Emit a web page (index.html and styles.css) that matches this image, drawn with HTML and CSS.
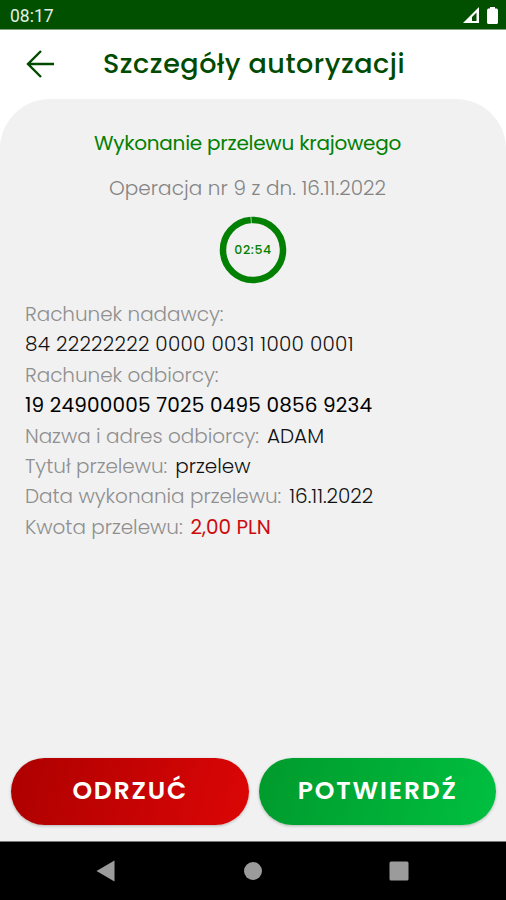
FILE: index.html
```html
<!DOCTYPE html>
<html lang="pl">
<head>
  <meta charset="UTF-8" />
  <meta name="viewport" content="width=device-width, initial-scale=1.0"/>
  <title>Szczegóły autoryzacji</title>
  <link rel="stylesheet" href="styles.css">
</head>
<body>
  <div class="status-bar">
    <span class="clock">08:17</span>
    <div class="status-icons">
      <svg width="16" height="16" viewBox="0 0 16 16"><path fill="#fff" fill-rule="evenodd" d="M0 16 16 0V16ZM9 14H13.500V5.500L9 10Z"/></svg>
      <svg width="11" height="17" viewBox="0 0 11 17"><path fill="#fff" d="M3 0H8V1.500H10L11 3V16L10 17H1L0 16V3L1 1.500H3Z"/></svg>
    </div>
  </div>

  <header>
    <a href="#" class="back">
      <svg width="28" height="28" viewBox="0 0 28 28"><path d="M15 1 2 14 15 27M2 14H28" fill="none" stroke="#004b00" stroke-width="2.400"/></svg>
    </a>
    <h1>Szczegóły autoryzacji</h1>
  </header>

  <main>
    <h2>Wykonanie przelewu krajowego</h2>
    <p class="operation">Operacja nr 9 z dn. 16.11.2022</p>

    <div class="timer">
      <svg width="68" height="68" viewBox="0 0 68 68">
        <circle cx="34" cy="34" r="30" fill="none" stroke="#028002" stroke-width="6.500" stroke-dasharray="187.500 1" transform="rotate(-93 34 34)"/>
      </svg>
      <span class="time">02:54</span>
    </div>

    <div class="details">
      <p><span class="label">Rachunek nadawcy:</span></p>
      <p><span class="value account">84 22222222 0000 0031 1000 0001</span></p>
      <p><span class="label">Rachunek odbiorcy:</span></p>
      <p><span class="value account strong">19 24900005 7025 0495 0856 9234</span></p>
      <p><span class="label">Nazwa i adres odbiorcy:</span><span class="value">ADAM</span></p>
      <p><span class="label">Tytuł przelewu:</span><span class="value">przelew</span></p>
      <p><span class="label">Data wykonania przelewu:</span><span class="value">16.11.2022</span></p>
      <p><span class="label">Kwota przelewu:</span><span class="value amount">2,00 PLN</span></p>
    </div>

    <div class="actions">
      <button type="button" class="btn btn-reject">ODRZUĆ</button>
      <button type="button" class="btn btn-confirm">POTWIERDŹ</button>
    </div>
  </main>

  <div class="nav-bar">
    <svg width="19" height="22" viewBox="0 0 19 22"><path d="M0.500 11 18.500 0.500V21.500Z" fill="#9b9b9b"/></svg>
    <svg width="20" height="20" viewBox="0 0 20 20"><circle cx="11" cy="10" r="9" fill="#9b9b9b"/></svg>
    <svg width="20" height="20" viewBox="0 0 20 20"><rect x="0.500" y="0.500" width="19" height="19" rx="1.500" fill="#9b9b9b"/></svg>
  </div>
</body>
</html>
```
FILE: styles.css
```css
* { margin: 0; padding: 0; box-sizing: border-box; }
body {
  font-family: Poppins, Inter, "Open Sans", sans-serif;
  background: #fff;
  height: 900px;
  display: flex;
  flex-direction: column;
  overflow: hidden;
}
svg { display: block; }
span { white-space: nowrap; }

.status-bar {
  height: 30px;
  background: #005000;
  border-bottom: 1px solid #7fa27f;
  display: flex;
  justify-content: space-between;
  padding: 7px 8px 0 10px;
}
.clock {
  font-family: Roboto, sans-serif;
  font-size: 17.5px;
  line-height: 19px;
  color: #e4eee4;
}
.status-icons { display: flex; gap: 8px; }

header {
  height: 69px;
  display: flex;
  align-items: center;
  padding: 0 26px 2px;
  gap: 49px;
}
header h1 {
  font-size: 27px;
  font-weight: 500;
  line-height: 40px;
  letter-spacing: 0.55px;
  color: #004b00;
  white-space: nowrap;
}

main {
  height: 742px;
  background: #f1f1f1;
  border-radius: 50px 50px 0 0;
  display: flex;
  flex-direction: column;
  padding: 29px 10px 16px 11px;
}
h2, .operation {
  text-align: center;
  padding-right: 12px;
}
h2 {
  font-size: 20px;
  font-weight: 400;
  line-height: 30px;
  letter-spacing: -0.25px;
  color: #028002;
}
.operation {
  margin-top: 15px;
  font-size: 20px;
  font-weight: 300;
  line-height: 30px;
  letter-spacing: 0.06px;
  color: #848484;
}

.timer {
  display: grid;
  place-items: center;
  margin-top: 13px;
  padding-right: 1px;
}
.timer > * { grid-area: 1 / 1; }
.time {
  font-size: 12.5px;
  font-weight: 500;
  letter-spacing: 0.6px;
  color: #028002;
}

.details {
  margin-top: 15px;
  padding-left: 14px;
  font-size: 20px;
  font-weight: 300;
  line-height: 30.4px;
}
.details p { display: flex; gap: 8px; }
.label {
  color: #8f8f8f;
  letter-spacing: -0.05px;
}
.value { color: #111; }
.account { letter-spacing: 0.26px; }
.strong {
  font-weight: 400;
  letter-spacing: 0.17px;
  color: #000;
}
.amount { font-weight: 400; color: #cc0c0c; }

.actions {
  margin-top: auto;
  display: grid;
  grid-template-columns: 1fr 1fr;
  gap: 10px;
}
.btn {
  height: 67px;
  padding: 0 0 2px 1px;
  border: none;
  border-radius: 34px;
  font: 600 25px Poppins, Inter, sans-serif;
  letter-spacing: 1.85px;
  color: #fff;
  box-shadow: 0 1px 3px rgba(0, 0, 0, 0.25);
  cursor: pointer;
}
.btn-reject { background: linear-gradient(105deg, #ad0000, #dc0606); }
.btn-confirm { background: linear-gradient(105deg, #009a2c, #00c040); }

.nav-bar {
  height: 59px;
  background: #000;
  border-top: 1px solid #777;
  display: flex;
  align-items: center;
  justify-content: space-between;
  padding: 0 97px 0 96px;
}
```
